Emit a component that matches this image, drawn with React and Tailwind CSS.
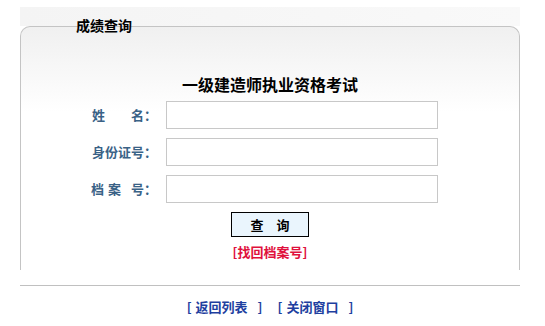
export default function App() {
  const cjk = { fontFamily: '"Noto Sans CJK SC", "Noto Sans", sans-serif' }

  return (
    <div className="h-[326px] w-[545px] overflow-hidden bg-white" style={cjk}>
      <div className="ml-[20px] w-[500px] pt-[7px]">
        <div className="h-[19px] bg-gradient-to-r from-[#f4f4f4] to-[#f9f9f9]" />
        <div className="relative h-[244px] rounded-t-[10px] border border-b-0 border-[#c4c4c4] bg-gradient-to-b from-[#f0f0f0] to-white to-[35%]">
          <span className="absolute left-[55px] top-[-11px] text-[14px] font-bold leading-[18px] text-black">成绩查询</span>

          <h1 className="mt-[47px] text-center text-[16px] font-bold leading-[20px] text-black">一级建造师执业资格考试</h1>

          <div className="mt-[7px] flex flex-col gap-[9px]">
            <div className="flex items-center gap-[9px]">
              <label className="w-[136px] text-right text-[13px] font-bold leading-[16px] text-[#3a6286]">姓　　名：</label>
              <input className="h-[28px] w-[272px] border border-[#c8c8c8] bg-white px-1 text-[13px] outline-none" />
            </div>
            <div className="flex items-center gap-[9px]">
              <label className="w-[136px] text-right text-[13px] font-bold leading-[16px] text-[#3a6286]">身份证号：</label>
              <input className="h-[28px] w-[272px] border border-[#c8c8c8] bg-white px-1 text-[13px] outline-none" />
            </div>
            <div className="flex items-center gap-[9px]">
              <label className="w-[136px] text-right text-[13px] font-bold leading-[16px] text-[#3a6286]">
                档<span className="inline-block w-[4px]" />案<span className="inline-block w-[10px]" />号：
              </label>
              <input className="h-[28px] w-[272px] border border-[#c8c8c8] bg-white px-1 text-[13px] outline-none" />
            </div>
          </div>

          <div className="mt-[9px] flex justify-center">
            <button className="h-[25px] w-[78px] border border-black bg-[#eaf5fd] text-[13px] font-bold leading-[16px] text-black">
              查　询
            </button>
          </div>

          <div className="mt-[7px] text-center text-[13px] font-bold leading-[16px] text-[#e0103c]">[找回档案号]</div>
        </div>

        <div className="mt-[15px] border-t border-[#c0c0c0]" />

        <div className="mt-[13px] flex justify-center gap-[15px] text-[13px] font-bold leading-[16px] text-[#1e3fa0]">
          <a href="#" className="flex">
            <span>[</span>
            <span className="w-[4px]" />
            <span>返回列表</span>
            <span className="w-[10px]" />
            <span>]</span>
          </a>
          <a href="#" className="flex">
            <span>[</span>
            <span className="w-[4px]" />
            <span>关闭窗口</span>
            <span className="w-[10px]" />
            <span>]</span>
          </a>
        </div>
      </div>
    </div>
  )
}
